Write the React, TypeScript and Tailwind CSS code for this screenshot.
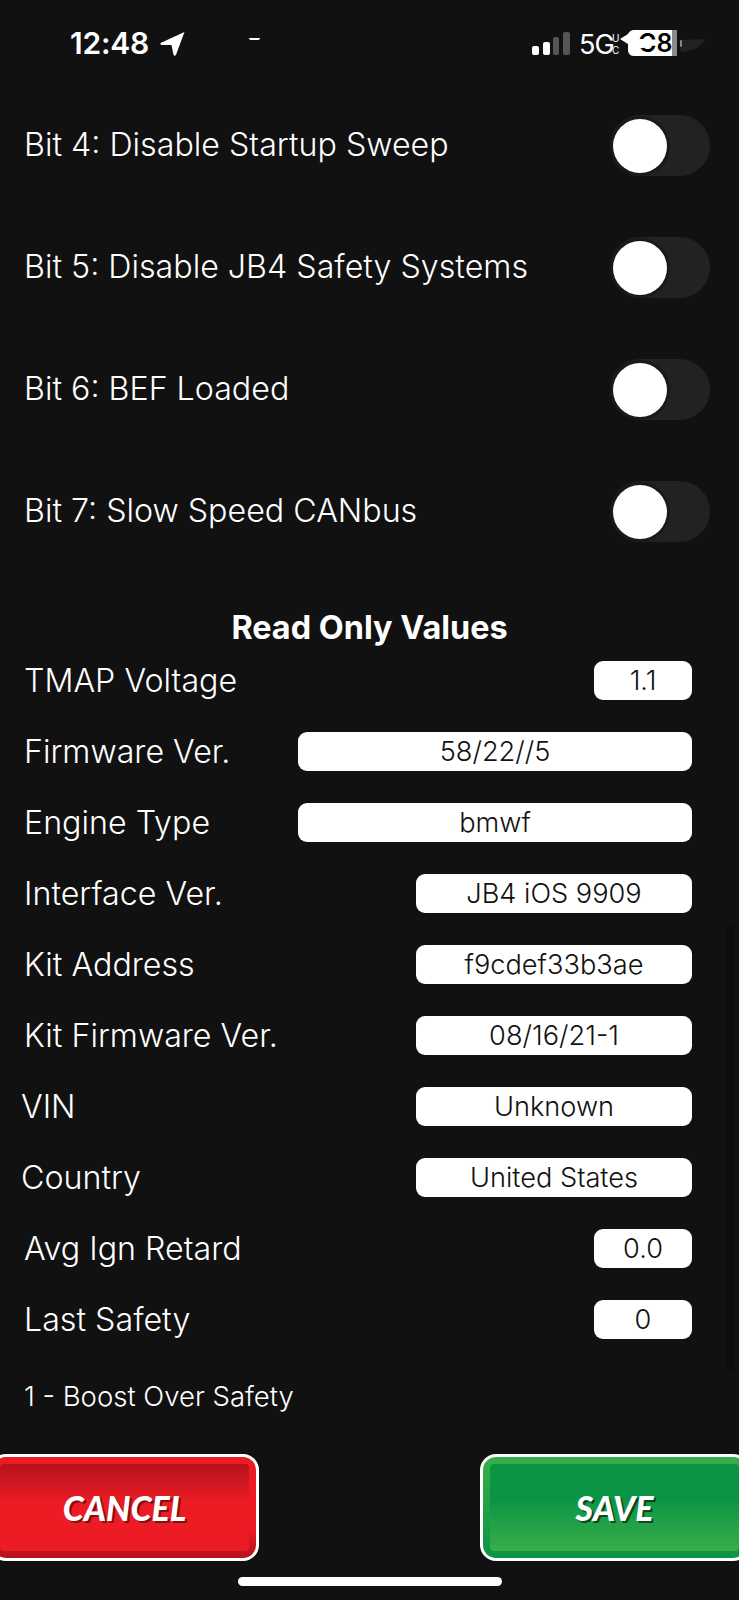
const bits = [
  "Bit 4: Disable Startup Sweep",
  "Bit 5: Disable JB4 Safety Systems",
  "Bit 6: BEF Loaded",
  "Bit 7: Slow Speed CANbus",
]

const readOnly = [
  { label: "TMAP Voltage", value: "1.1", box: "w-[98px]", inset: "pl-[24px]" },
  { label: "Firmware Ver.", value: "58/22//5", box: "w-[394px]", inset: "pl-[24px]" },
  { label: "Engine Type", value: "bmwf", box: "w-[394px]", inset: "pl-[24px]" },
  { label: "Interface Ver.", value: "JB4 iOS 9909", box: "w-[276px]", inset: "pl-[24px]" },
  { label: "Kit Address", value: "f9cdef33b3ae", box: "w-[276px]", inset: "pl-[24px]" },
  { label: "Kit Firmware Ver.", value: "08/16/21-1", box: "w-[276px]", inset: "pl-[24px]" },
  { label: "VIN", value: "Unknown", box: "w-[276px]", inset: "pl-[21px]" },
  { label: "Country", value: "United States", box: "w-[276px]", inset: "pl-[21px]" },
  { label: "Avg Ign Retard", value: "0.0", box: "w-[98px]", inset: "pl-[24px]" },
  { label: "Last Safety", value: "0", box: "w-[98px]", inset: "pl-[24px]" },
]

function StatusBar() {
  return (
    <div className="relative h-[115px] shrink-0 text-white">
      <div className="flex items-center pl-[70px] pt-[25px]">
        <span className="text-[30px] leading-[36px] font-semibold font-['Inter',sans-serif] tracking-[-0.2px]">12:48</span>
        <svg viewBox="0 0 24 24" className="ml-[11px] h-[25px] w-[25px]" fill="#fff">
          <path d="M23.5 1 L0.5 11.5 Q0 13.5 2 13.5 L11 13.5 L13 23 Q14.5 24.5 15.5 22.5 Z" />
        </svg>
      </div>
      {/* bits of the status bar that the screenshot caught half drawn */}
      <div className="absolute left-[249px] top-[38px] h-[2px] w-[11px] rounded-b-full bg-white" />
      <svg viewBox="0 0 40 24" className="absolute left-[531px] top-[32px] h-[24px] w-[40px]">
        <rect x="1" y="14" width="7" height="9" rx="2" fill="#fff" />
        <rect x="12" y="10" width="7" height="13" rx="2" fill="#fff" />
        <rect x="22" y="5" width="6" height="18" rx="2" fill="#555" />
        <rect x="32" y="0" width="7" height="23" rx="2" fill="#555" />
      </svg>
      <span className="absolute left-[579px] top-[31px] text-[27px] leading-[27px] font-['Inter',sans-serif] tracking-[-1px]">5G</span>
      <span className="absolute left-[612px] top-[33px] text-[10px] leading-[10px] font-['Inter',sans-serif]">U</span>
      <span className="absolute left-[612px] top-[45px] text-[10px] leading-[10px] font-['Inter',sans-serif]">C</span>
      <svg viewBox="0 0 90 30" className="absolute left-[619px] top-[29px] h-[30px] w-[90px]">
        <path d="M60 11 L86 10 Q80 22 62 23 Z" fill="#222" />
        <path d="M1 10 L9 5 Q11 1 15 1 H58 V27 H15 Q10 27 9 22 V15 Z" fill="#fff" />
        <rect x="53" y="1" width="5" height="26" fill="#8a8a8a" />
        <rect x="61" y="11" width="2" height="7" rx="1" fill="#888" />
      </svg>
      <span className="absolute left-[638px] top-[31px] text-[25px] leading-[25px] font-semibold text-black font-['Inter',sans-serif]">C8</span>
      <div className="absolute left-[636px] top-[39px] h-[9px] w-[8px] bg-white" />
    </div>
  )
}

function Toggle() {
  return (
    <div className="flex h-[61px] w-[100px] items-center rounded-full bg-[#222222] pl-[3px]">
      <div className="h-[54px] w-[54px] rounded-full bg-white shadow-[0_0_0_3px_#1a1a1a]" />
    </div>
  )
}

export default function App() {
  return (
    <div className="relative flex h-[1600px] w-[739px] flex-col overflow-hidden bg-[#111111] font-['Inter',sans-serif] text-white">
      <StatusBar />

      <div className="flex flex-col gap-[61px] pl-[24px] pr-[29px]">
        {bits.map((bit) => (
          <div key={bit} className="flex h-[61px] items-center justify-between">
            <span className="text-[32.2px] font-light">{bit}</span>
            <Toggle />
          </div>
        ))}
      </div>

      <h2 className="mt-[66px] h-[40px] text-center text-[32.4px] leading-[40px] font-bold">Read Only Values</h2>

      <div className="mt-[13px] flex flex-col gap-[32px]">
        {readOnly.map((row) => (
          <div key={row.label} className={`flex h-[39px] items-center justify-between pr-[47px] ${row.inset}`}>
            <span className="translate-y-[1px] text-[32.2px] font-light">{row.label}</span>
            <div className={`flex h-[39px] items-center justify-center rounded-[9px] bg-white pt-[1px] text-[27.2px] font-light text-[#111111] ${row.box}`}>
              {row.value}
            </div>
          </div>
        ))}
      </div>

      <p className="mt-[41px] pl-[24px] text-[27.5px] leading-[32px] font-light">1 - Boost Over Safety</p>

      <div className="mt-[42px] -mx-[10px] flex justify-between">
        <button className="flex h-[107px] w-[269px] rounded-[16px] border-[3px] border-white bg-[linear-gradient(#ed1c24_70%,#b5121b)] p-[7px]">
          <span className="flex h-full w-full items-center justify-center rounded-[4px] bg-[linear-gradient(#b5121b,#ed1c24_45%)] text-[34px] font-black italic font-['Lato',sans-serif] [text-shadow:2px_2px_0_rgba(0,0,0,0.45)]">
            CANCEL
          </span>
        </button>
        <button className="flex h-[107px] w-[269px] rounded-[16px] border-[3px] border-white bg-[linear-gradient(#39ae4a,#0b9444)] p-[7px]">
          <span className="flex h-full w-full items-center justify-center rounded-[4px] bg-[linear-gradient(#0b9444_40%,#39ae4a)] text-[34px] font-black italic font-['Lato',sans-serif] [text-shadow:2px_2px_0_rgba(0,0,0,0.55)]">
            SAVE
          </span>
        </button>
      </div>

      {/* scroll indicator and home bar sit over the page */}
      <div className="absolute left-[727px] top-[925px] h-[445px] w-[6px] rounded-full bg-[#0d0d0d]" />
      <div className="absolute left-[238px] top-[1577px] h-[9px] w-[264px] rounded-full bg-white" />
    </div>
  )
}
